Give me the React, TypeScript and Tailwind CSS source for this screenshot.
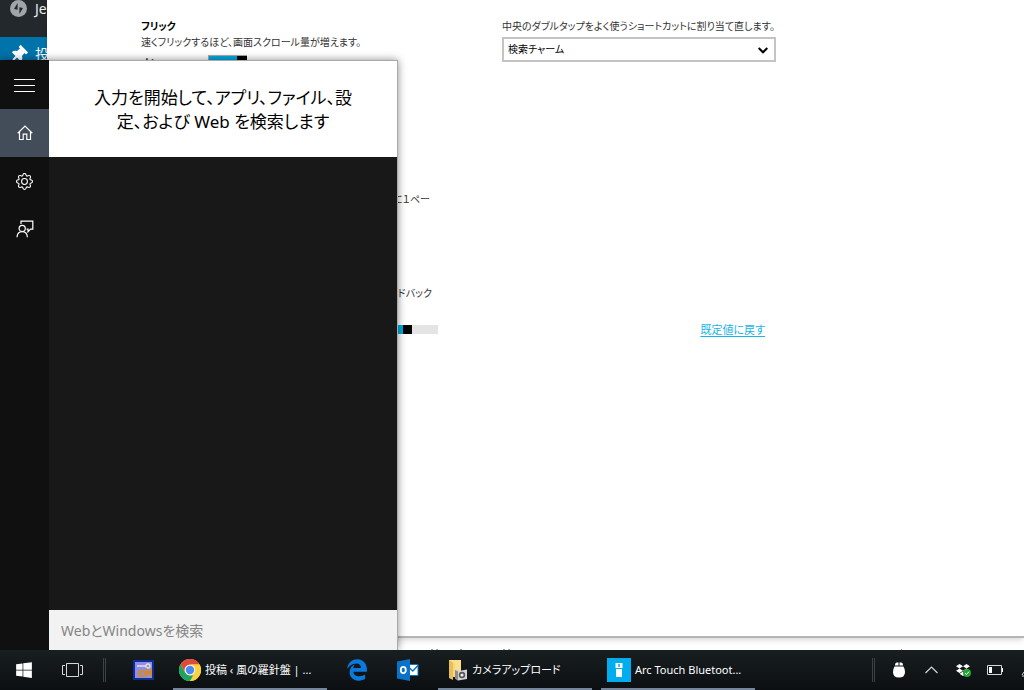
import type { ReactNode } from 'react';
import clsx from 'clsx';
import { BsGear } from 'react-icons/bs';
import { FaDropbox, FaEdgeLegacy, FaThumbtack, FaWindows } from 'react-icons/fa';

const HomeIcon = () => (
  <svg width="16" height="16" viewBox="0 0 16 16" fill="none" stroke="currentColor" strokeWidth="1.2">
    <path d="M.7 8.3 8 1.1l7.3 7.2M2.5 7v7.5h3.7V9.2h3.6v5.3h3.7V7" />
  </svg>
);

const FeedbackIcon = () => (
  <svg width="18" height="18" viewBox="0 0 18 18" fill="none" stroke="currentColor" strokeWidth="1.2">
    <circle cx="6.2" cy="8.4" r="3.1" />
    <path d="M1 17.2c.2-3.4 2.2-5.6 5.2-5.6s5 2.2 5.2 5.6M5 4V1.2h11.8v8h-2.3L12 11.8V9.2h-1.4" />
  </svg>
);

const JetpackIcon = () => (
  <svg width="17" height="17" viewBox="0 0 17 17" className="shrink-0">
    <circle cx="8.5" cy="8.5" r="8.5" fill="#a0a5aa" />
    <path d="M7.6 3v6.8L4 8.9zM9.4 14V7.2l3.6.9z" fill="#23282d" />
  </svg>
);

const TaskViewIcon = () => (
  <svg width="21" height="16" viewBox="0 0 21 16" fill="none" stroke="#d5d7d8">
    <path d="M4.5 1.5h12v13h-12zM3 3.5H.5v9H3M18 3.5h2.5v9H18" />
  </svg>
);

const IdmIcon = () => (
  <svg width="21" height="20" viewBox="0 0 21 20">
    <path d="M0 0h21v20H0z" fill="#0b2f96" />
    <path d="M2 2h17v16H2z" fill="#8f8df0" />
    <path d="M4 6h9" stroke="#e8e6c8" strokeWidth="1.5" />
    <circle cx="15" cy="6" r="2" fill="none" stroke="#e8e6c8" strokeWidth="1.3" />
    <path
      d="M6 10v7M8.5 10.5v6h1q2.5 0 2.5-3t-2.5-3zM14 17v-7l2 3.5 2-3.5v7"
      fill="none"
      stroke="#d98a14"
      strokeWidth="1.6"
    />
  </svg>
);

const ChromeIcon = () => (
  <svg width="22" height="22" viewBox="0 0 24 24">
    <circle cx="12" cy="12" r="12" fill="#fdd23e" />
    <path d="M1.6 6A12 12 0 0 1 22.4 6H12a6 6 0 0 0-5.2 9z" fill="#dd4b3e" />
    <path d="M1.6 6l5.2 9A6 6 0 0 0 12 18h5.2L12 24A12 12 0 0 1 1.6 6z" fill="#1da362" />
    <path d="M17.2 15 12 24a12 12 0 0 0 10.4-18H12a6 6 0 0 1 5.2 9z" fill="#fdd23e" />
    <circle cx="12" cy="12" r="5.7" fill="#f3f6fa" />
    <circle cx="12" cy="12" r="4.6" fill="#4a89f4" />
  </svg>
);

const OutlookIcon = () => (
  <svg width="22" height="22" viewBox="0 0 22 22">
    <path d="M11 5.5h10v11H11z" fill="#fff" stroke="#0a72c9" />
    <path d="m12.5 9 3.3 3L21 6.5" fill="none" stroke="#0a72c9" strokeWidth="1.5" />
    <path d="M0 2.5 13 0v22L0 19.5z" fill="#0a72c9" />
    <ellipse cx="6.3" cy="11" rx="2.5" ry="3.2" fill="none" stroke="#fff" strokeWidth="1.8" />
  </svg>
);

const FolderIcon = () => (
  <svg width="20" height="22" viewBox="0 0 20 22">
    <path d="M1 1h12v17H1z" fill="#fbe08c" />
    <path d="m1 1 4 2.5V21l-4-2z" fill="#e9bd57" />
    <path d="M5 3.5h2V18H5z" fill="#f8d77c" />
    <path d="m7 11 3-1 1 2 8-1.5V20l-9 1.5-3-2z" fill="#d4d4d2" />
    <path d="m7 11 3 1.5v9l-3-2z" fill="#8c8c8a" />
    <circle cx="14" cy="16" r="3.2" fill="#555" />
    <circle cx="14" cy="16" r="1.6" fill="#ececec" />
  </svg>
);

const ArcTouchIcon = () => (
  <svg width="24" height="24" viewBox="0 0 24 24">
    <path d="M0 0h24v24H0z" fill="#00adef" />
    <path d="M8.5 5h7v5h-7zM9 11h6v8H9z" fill="#fff" />
    <path d="M12 6v3" stroke="#00adef" strokeWidth="1.5" />
  </svg>
);

const MouseIcon = () => (
  <svg width="12" height="16" viewBox="0 0 12 16">
    <path d="M2 3.6Q2 .5 4 .5h4q2 0 2 3.1z" fill="#fff" />
    <path d="M6 0v4" stroke="#14191c" />
    <path d="M1.5 4.5h9Q12 7 12 10q0 5.5-6 5.5T0 10q0-3 1.5-5.5z" fill="#fff" />
  </svg>
);

const BatteryIcon = () => (
  <svg width="16" height="10" viewBox="0 0 16 10">
    <path d="M.5.5h14v9H.5z" fill="none" stroke="#d5d7d8" />
    <path d="M2 2h3v6H2zM15 3h1v4h-1z" fill="#fff" />
  </svg>
);

const railItems = [
  {
    label: 'メニュー',
    icon: (
      <svg width="21" height="13" viewBox="0 0 21 13" stroke="currentColor">
        <path d="M0 .5h21M0 6.5h21M0 12.5h21" />
      </svg>
    ),
  },
  { label: 'ホーム', icon: <HomeIcon />, isActive: true },
  { label: '設定', icon: <BsGear size={17} /> },
  { label: 'フィードバック', icon: <FeedbackIcon /> },
];

const TaskButton = ({ icon, title, label }: TaskButtonProps) => (
  <button
    type="button"
    aria-label={label}
    className={clsx(
      'flex h-full items-center text-[11px] text-white',
      title ? 'w-[154px] border-y-2 border-t-transparent border-b-[#75859b] gap-1 pl-1.5' : 'w-[42px] justify-center',
    )}
  >
    {icon}
    {title ? <span className="whitespace-nowrap">{title}</span> : null}
  </button>
);

type TaskButtonProps = {
  icon: ReactNode;
  title?: string;
  label?: string;
};

const AdminMenu = () => (
  <nav className="w-[47px] shrink-0 overflow-hidden bg-[#23282d] text-sm text-[#eee]">
    <a href="#jetpack" className="flex h-[37px] items-start gap-2 whitespace-nowrap pl-2.5">
      <JetpackIcon />
      <span className="leading-[18px]">Je</span>
    </a>
    <a href="#posts" className="flex h-[34px] items-center gap-2 whitespace-nowrap bg-[#0073aa] pl-2.5 text-white">
      <FaThumbtack size={17} className="shrink-0 rotate-45" />
      投
    </a>
  </nav>
);

const Settings = () => (
  <main className="flex min-w-0 flex-1 flex-col bg-white text-[10px] text-[#333]">
    <div className="flex h-[638px] shrink-0 gap-16 border-b-2 border-[#b5b5b5] pl-[94px] pt-[18px] shadow-md">
      <section className="w-[297px] shrink-0">
        <h2 className="font-bold leading-4 text-black">フリック</h2>
        <p className="leading-4">速くフリックするほど、画面スクロール量が増えます。</p>
        <label className="mt-1 flex h-[18px] items-center font-bold text-black">
          <span className="w-[67px]">オン</span>
          <input
            type="checkbox"
            role="switch"
            defaultChecked
            className="h-4 w-[39px] appearance-none border border-r-0 border-[#aaa] bg-linear-to-r from-[#00aadf] from-75% to-black to-75%"
          />
        </label>
        <p className="mt-[119px] pr-2 text-right leading-4">に１ペー</p>
        <label htmlFor="feedback" className="mt-[78px] block pr-1.5 text-right leading-4">
          ドバック
        </label>
        <input
          id="feedback"
          type="range"
          defaultValue={91}
          className="mt-6 block h-[9px] w-full appearance-none bg-linear-to-r from-[#00aadf] from-90% to-[#e4e4e4] to-90% [&::-webkit-slider-thumb]:size-[9px] [&::-webkit-slider-thumb]:appearance-none [&::-webkit-slider-thumb]:bg-black"
        />
      </section>
      <section className="w-[274px] shrink-0">
        <label htmlFor="shortcut" className="block whitespace-nowrap leading-4">
          中央のダブルタップをよく使うショートカットに割り当て直します。
        </label>
        <div className="relative mt-[3px]">
          <select
            id="shortcut"
            className="block h-[25px] w-full appearance-none border-2 border-[#c4c4c4] bg-white px-1 text-black"
          >
            <option>検索チャーム</option>
          </select>
          <svg
            className="pointer-events-none absolute right-2 top-2.5"
            width="10"
            height="7"
            viewBox="0 0 10 7"
            fill="none"
            stroke="#000"
            strokeWidth="2"
          >
            <path d="m.7 1 4.3 4.3L9.3 1" />
          </svg>
        </div>
        <p className="mt-[260px] pr-[11px] text-right text-[11px] leading-4">
          <a href="#reset" className="text-[#18b5e6] underline underline-offset-2">
            既定値に戻す
          </a>
        </p>
      </section>
    </div>
    {/* page behind the settings window, only its top edge is visible */}
    <svg className="ml-[384px] mt-[11px] shrink-0" width="482" height="1" viewBox="0 0 482 1" fill="#7fb0c8">
      <path d="M0 0h2v1H0zM5 0h2v1H5zM29 0h2v1h-2zM72 0h2v1h-2zM77 0h2v1h-2zM470 0h1v1h-1z" />
    </svg>
  </main>
);

const SearchPane = () => (
  <aside className="absolute bottom-0 left-0 top-[60px] flex w-[398px] shadow-[0_0_8px_rgba(0,0,0,0.45)]">
    <nav className="w-[49px] shrink-0 bg-[#101010] pt-px text-white">
      {railItems.map(({ label, icon, isActive }) => (
        <button
          key={label}
          type="button"
          aria-label={label}
          className={clsx('flex h-12 w-full items-center justify-center', { 'bg-[#434c59]': isActive })}
        >
          {icon}
        </button>
      ))}
    </nav>
    <div className="flex flex-1 flex-col border-r border-t border-[#aaa] bg-[#181818]">
      <h1 className="bg-white pb-[23px] pt-[25px] text-center text-[17px] leading-6 text-black">
        入力を開始して、アプリ、ファイル、設
        <br />
        定、および Web を検索します
      </h1>
      <input
        type="search"
        aria-label="検索"
        placeholder="WebとWindowsを検索"
        className="mt-auto h-10 bg-[#f2f2f2] px-3 text-sm outline-none placeholder:text-[#858585]"
      />
    </div>
  </aside>
);

const Divider = () => <div className="h-6 w-[3px] border-x border-[#3c4144]" />;

const Taskbar = () => (
  <footer className="z-10 flex h-10 shrink-0 items-center overflow-hidden bg-linear-to-b from-[#191e21] to-[#0b0f12]">
    <button type="button" aria-label="スタート" className="flex h-full w-12 items-center justify-center text-white">
      <FaWindows size={18} />
    </button>
    <button type="button" aria-label="タスク ビュー" className="mr-[7px] flex h-full w-12 items-center justify-center">
      <TaskViewIcon />
    </button>
    <Divider />
    <div className="ml-4 flex h-full gap-[9px]">
      <TaskButton icon={<IdmIcon />} label="IDM" />
      <TaskButton icon={<ChromeIcon />} title="投稿 ‹ 風の羅針盤 | ..." />
      <TaskButton icon={<FaEdgeLegacy size={22} color="#0a7bdc" />} label="Edge" />
      <TaskButton icon={<OutlookIcon />} label="Outlook" />
      <TaskButton
        icon={
          <span className="pl-1">
            <FolderIcon />
          </span>
        }
        title="カメラアップロード"
      />
      <TaskButton icon={<ArcTouchIcon />} title="Arc Touch Bluetoot..." />
    </div>
    <div className="ml-auto flex items-center">
      <Divider />
      <div className="ml-2 flex items-center text-white">
        <button type="button" aria-label="マウス" className="flex w-8 justify-center">
          <MouseIcon />
        </button>
        <button type="button" aria-label="隠れているインジケーター" className="flex w-8 justify-center">
          <svg width="13" height="8" viewBox="0 0 13 8" fill="none" stroke="#d5d7d8" strokeWidth="1.2">
            <path d="m.5 7 6-6 6 6" />
          </svg>
        </button>
        <button type="button" aria-label="Dropbox" className="relative flex w-8 justify-center">
          <FaDropbox size={14} />
          <svg className="absolute left-4 top-1.5" width="8" height="8" viewBox="0 0 8 8">
            <circle cx="4" cy="4" r="4" fill="#22a82e" />
            <path d="m2 4 1.5 1.5L6 2.7" fill="none" stroke="#fff" />
          </svg>
        </button>
        <button type="button" aria-label="バッテリー" className="flex w-8 justify-center">
          <BatteryIcon />
        </button>
        <svg className="ml-2.5" width="3" height="16" viewBox="0 0 3 16" stroke="#d5d7d8">
          <path d="m1 13 2-3M1 14h2" />
        </svg>
      </div>
    </div>
  </footer>
);

export default function App() {
  return (
    <div className="flex h-screen flex-col overflow-hidden bg-white font-['Noto_Sans','Noto_Sans_CJK_JP',sans-serif] [font-feature-settings:'palt']">
      <div className="relative flex min-h-0 flex-1 overflow-hidden">
        <AdminMenu />
        <Settings />
        <SearchPane />
      </div>
      <Taskbar />
    </div>
  );
}
